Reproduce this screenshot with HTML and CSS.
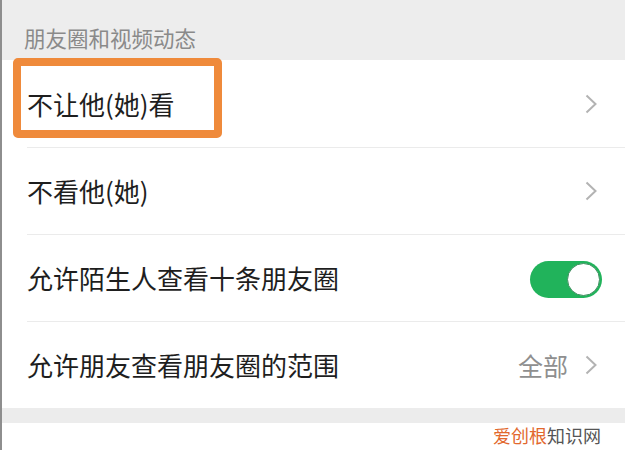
FILE: index.html
```html
<!DOCTYPE html>
<html lang="zh-CN">
<head>
<meta charset="utf-8">
<link rel="stylesheet" href="styles.css">
</head>
<body>
<div class="page">
  <div class="section-title">朋友圈和视频动态</div>
  <div class="list">
    <div class="row">
      <span class="label">不让他(她)看</span>
      <svg class="chevron" width="12" height="20" viewBox="0 0 12 20"><polyline points="1.5,1.5 10.5,10 1.5,18.5" fill="none" stroke="#b3b3b3" stroke-width="2"/></svg>
    </div>
    <div class="row">
      <span class="label">不看他(她)</span>
      <svg class="chevron" width="12" height="20" viewBox="0 0 12 20"><polyline points="1.5,1.5 10.5,10 1.5,18.5" fill="none" stroke="#b3b3b3" stroke-width="2"/></svg>
    </div>
    <div class="row">
      <span class="label">允许陌生人查看十条朋友圈</span>
      <span class="toggle"><span class="knob"></span></span>
    </div>
    <div class="row">
      <span class="label">允许朋友查看朋友圈的范围</span>
      <span class="value">全部</span>
      <svg class="chevron" width="12" height="20" viewBox="0 0 12 20"><polyline points="1.5,1.5 10.5,10 1.5,18.5" fill="none" stroke="#b3b3b3" stroke-width="2"/></svg>
    </div>
  </div>
  <div class="band"></div>
  <div class="list">
    <div class="row"></div>
  </div>
  <div class="highlight"></div>
  <div class="watermark"><span class="wm-orange">爱创根</span>知识网</div>
</div>
</body>
</html>
```
FILE: styles.css
```css
html, body {
  margin: 0;
  padding: 0;
  background: #ffffff;
}
body {
  font-family: "Noto Sans CJK SC", "Noto Sans", sans-serif;
}
.page {
  position: relative;
  width: 625px;
  height: 450px;
  overflow: hidden;
  box-sizing: border-box;
  border-left: 2px solid #8e8e8e;
  background: #ffffff;
}
.section-title {
  height: 60px;
  box-sizing: border-box;
  background: #ededed;
  padding: 27px 0 0 22px;
  font-size: 21.5px;
  line-height: 22px;
  color: #8a8a8a;
}
.list {
  background: #ffffff;
}
.row {
  height: 87px;
  box-sizing: border-box;
  margin-left: 25px;
  padding-right: 28px;
  display: flex;
  align-items: center;
  border-top: 1px solid #ebebeb;
}
.row:first-child {
  border-top: none;
}
.label {
  flex: 1;
  font-size: 26px;
  line-height: 30px;
  color: #1e1e1e;
}
.value {
  font-size: 25px;
  color: #8f8f8f;
  margin-right: 17px;
}
.chevron {
  display: block;
  flex: none;
}
.toggle {
  position: relative;
  width: 72px;
  height: 37px;
  margin-right: -5px;
  margin-top: 3px;
  border-radius: 19px;
  background: #21b35b;
  flex: none;
}
.knob {
  position: absolute;
  right: 2px;
  top: 2px;
  width: 33px;
  height: 33px;
  box-sizing: border-box;
  border-radius: 50%;
  background: #ffffff;
  border: 1.5px solid #3f8f60;
}
.band {
  height: 15px;
  background: #ececec;
}
.highlight {
  position: absolute;
  left: 11px;
  top: 58px;
  width: 209px;
  height: 80px;
  box-sizing: border-box;
  border: 8px solid #ef8a3b;
  border-radius: 5px;
}
.watermark {
  position: absolute;
  right: 24px;
  top: 423px;
  font-size: 18px;
  line-height: 24px;
  color: #555555;
}
.wm-orange {
  color: #e2682d;
}
```
